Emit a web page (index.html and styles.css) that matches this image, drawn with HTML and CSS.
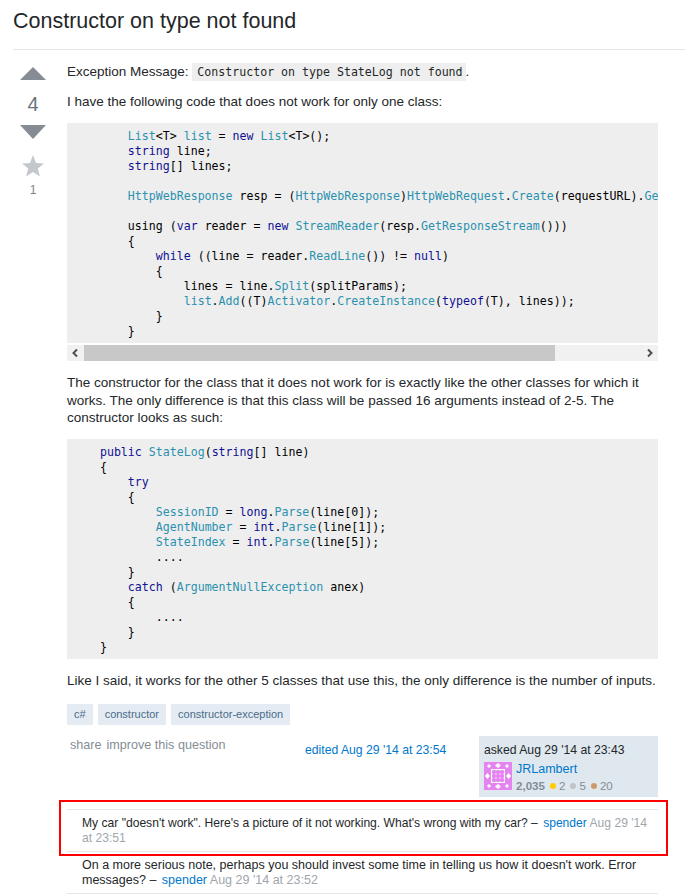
FILE: index.html
```html
<!DOCTYPE html>
<html lang="en">
<head>
    <meta charset="UTF-8">
    <meta name="viewport" content="width=device-width, initial-scale=1.0">
    <title>Constructor on type not found</title>
    <link rel="stylesheet" href="styles.css">
</head>

<body>
    <h1 class="title">Constructor on type not found</h1>
    <div class="question">
        <div class="votes">
            <svg class="arrow-up" width="26" height="13" viewBox="0 0 26 13"><polygon points="13,0 26,13 0,13"/></svg>
            <div class="count">4</div>
            <svg class="arrow-down" width="26" height="14" viewBox="0 0 26 14"><polygon points="0,0 26,0 13,14"/></svg>
            <svg class="star" width="22" height="22" viewBox="0 0 22 22"><polygon points="11,0 14,8 22,8.4 15.8,13.4 17.9,21.5 11,17 4.1,21.5 6.2,13.4 0,8.4 8,8"/></svg>
            <div class="favs">1</div>
        </div>
        <div class="post">
            <p>Exception Message: <code>Constructor on type StateLog not found</code>.</p>
            <p>I have the following code that does not work for only one class:</p>
            <pre class="code scrolled">        <span class="t">List</span>&lt;T&gt; <span class="t">list</span> = <span class="k">new</span> <span class="t">List</span>&lt;T&gt;();
        <span class="k">string</span> line;
        <span class="k">string</span>[] lines;

        <span class="t">HttpWebResponse</span> resp = (<span class="t">HttpWebResponse</span>)<span class="t">HttpWebRequest</span>.<span class="t">Create</span>(requestURL).<span class="t">GetResponse</span>();

        using (<span class="k">var</span> reader = <span class="k">new</span> <span class="t">StreamReader</span>(resp.<span class="t">GetResponseStream</span>()))
        {
            <span class="k">while</span> ((line = reader.<span class="t">ReadLine</span>()) != <span class="k">null</span>)
            {
                lines = line.<span class="t">Split</span>(splitParams);
                <span class="t">list</span>.<span class="t">Add</span>((T)<span class="t">Activator</span>.<span class="t">CreateInstance</span>(<span class="k">typeof</span>(T), lines));
            }
        }</pre>
            <div class="scrollbar">
                <svg width="17" height="16" viewBox="0 0 17 16"><path d="M10 4.5 L6.5 8 L10 11.5" fill="none" stroke="#505050" stroke-width="2"/></svg>
                <div class="track"><div class="thumb"></div></div>
                <svg width="17" height="16" viewBox="0 0 17 16"><path d="M7 4.5 L10.5 8 L7 11.5" fill="none" stroke="#505050" stroke-width="2"/></svg>
            </div>
            <p>The constructor for the class that it does not work for is exactly like the other classes for which it works. The only difference is that this class will be passed 16 arguments instead of 2-5. The constructor looks as such:</p>
            <pre class="code">    <span class="k">public</span> <span class="t">StateLog</span>(<span class="k">string</span>[] line)
    {
        <span class="k">try</span>
        {
            <span class="t">SessionID</span> = <span class="k">long</span>.<span class="t">Parse</span>(line[0]);
            <span class="t">AgentNumber</span> = <span class="k">int</span>.<span class="t">Parse</span>(line[1]);
            <span class="t">StateIndex</span> = <span class="k">int</span>.<span class="t">Parse</span>(line[5]);
            ....
        }
        <span class="k">catch</span> (<span class="t">ArgumentNullException</span> anex)
        {
            ....
        }
    }</pre>
            <p>Like I said, it works for the other 5 classes that use this, the only difference is the number of inputs.</p>
            <div class="tags">
                <a class="tag">c#</a>
                <a class="tag">constructor</a>
                <a class="tag">constructor-exception</a>
            </div>
            <div class="post-footer">
                <div class="menu"><a>share</a><a>improve this question</a></div>
                <a class="edited">edited Aug 29 '14 at 23:54</a>
                <div class="owner">
                    <div class="asked">asked Aug 29 '14 at 23:43</div>
                    <div class="user">
                        <svg class="avatar" width="28" height="28" viewBox="0 0 28 28">
                            <rect width="28" height="28" fill="#e584f0"/>
                            <rect x="7" y="7" width="14" height="14" fill="#fff"/>
                            <g fill="#e584f0">
                                <circle cx="10" cy="10" r="2.2"/><circle cx="14" cy="10" r="2.2"/><circle cx="18" cy="10" r="2.2"/>
                                <circle cx="10" cy="14" r="2.2"/><circle cx="14" cy="14" r="2.2"/><circle cx="18" cy="14" r="2.2"/>
                                <circle cx="10" cy="18" r="2.2"/><circle cx="14" cy="18" r="2.2"/><circle cx="18" cy="18" r="2.2"/>
                            </g>
                            <g fill="#fff">
                                <polygon points="14,1 17,3.5 14,6 11,3.5"/><polygon points="14,22 17,24.5 14,27 11,24.5"/>
                                <polygon points="3.5,11 6,14 3.5,17 1,14"/><polygon points="24.5,11 27,14 24.5,17 22,14"/>
                                <polygon points="5,2 7,4 5,6 3,4"/><polygon points="23,2 25,4 23,6 21,4"/>
                                <polygon points="5,22 7,24 5,26 3,24"/><polygon points="23,22 25,24 23,26 21,24"/>
                            </g>
                        </svg>
                        <div class="user-info">
                            <a class="user-name">JRLambert</a>
                            <div class="rep"><b>2,035</b><i class="dot gold"></i>2<i class="dot silver"></i>5<i class="dot bronze"></i>20</div>
                        </div>
                    </div>
                </div>
            </div>
            <div class="comments">
                <div class="comment">My car "doesn't work". Here's a picture of it not working. What's wrong with my car? &ndash; <a>spender</a> <span class="date">Aug 29 '14 at 23:51</span></div>
                <div class="comment">On a more serious note, perhaps you should invest some time in telling us how it doesn't work. Error messages? &ndash; <a>spender</a> <span class="date">Aug 29 '14 at 23:52</span></div>
                <div class="highlight"></div>
            </div>
        </div>
    </div>
</body>

</html>
```

FILE: styles.css
```css
body {
    margin: 0;
    padding-left: 13px;
    height: 894px;
    overflow: hidden;
    background: #fff;
    color: #242729;
    font-family: "Liberation Sans", Arial, sans-serif;
    font-size: 13.5px;
    line-height: 17.5px;
}

a {
    color: #0077cc;
}

.title {
    margin: 0;
    height: 49px;
    font-size: 21.5px;
    font-weight: normal;
    line-height: 42px;
    border-bottom: 1px solid #e4e6e8;
}

.question {
    display: flex;
    padding-top: 12.5px;
}

.votes {
    width: 40px;
    margin-right: 14px;
    flex-shrink: 0;
    display: flex;
    flex-direction: column;
    align-items: center;
    padding-top: 4.5px;
    color: #6a737c;
}

.votes svg {
    fill: #858c93;
}

.count {
    font-size: 20px;
    line-height: 24px;
    margin: 12px 0 9px;
}

.votes .star {
    fill: #c4c8cc;
    margin-top: 16px;
}

.favs {
    font-size: 12px;
    line-height: 16px;
    margin-top: 5px;
    color: #808185;
}

.post {
    width: 591px;
    flex-shrink: 0;
}

.post p {
    margin: 0 0 12px;
    padding-top: 0.5px;
}

.post p:first-child {
    margin-bottom: 12.5px;
    padding-top: 0;
}

code {
    font-family: "DejaVu Sans Mono", monospace;
    font-size: 11.6px;
    line-height: 1;
    background: #eee;
    padding: 2px 3px 2px 5px;
}

.code {
    margin: 0 0 12.5px;
    padding: 6px 5px 4px;
    background: #eee;
    color: #000;
    font-family: "DejaVu Sans Mono", monospace;
    font-size: 11.6px;
    line-height: 15px;
    overflow: hidden;
}

.code.scrolled {
    margin-bottom: 2px;
}

.t {
    color: #2b91af;
}

.k {
    color: #101094;
}

.scrollbar {
    display: flex;
    height: 16px;
    margin-bottom: 13px;
    background: #f1f1f1;
}

.track {
    flex: 1;
}

.thumb {
    width: 471px;
    height: 100%;
    background: #c8c8c8;
}

.tags {
    display: flex;
    gap: 5px;
    margin-top: 15px;
    height: 21px;
}

.tag {
    padding: 0 7px;
    background: #e4ebf3;
    color: #4a6b8a;
    font-size: 11px;
    line-height: 21px;
}

.post-footer {
    display: flex;
    margin-top: 11px;
    font-size: 12.2px;
}

.menu {
    width: 238px;
    box-sizing: border-box;
    padding: 1px 0 0 3px;
    color: #848d95;
    font-size: 12.6px;
}

.menu a {
    color: #848d95;
    margin-right: 5px;
}

.edited {
    width: 174px;
    padding-top: 6px;
}

.owner {
    width: 179px;
    height: 61px;
    padding: 6px 5px 5px;
    box-sizing: border-box;
    background: #dfe8ef;
}

.user {
    display: flex;
    margin-top: 2px;
}

.user-info {
    margin-left: 4px;
}

.user-name {
    display: block;
    font-size: 12.5px;
    line-height: 15px;
}

.rep {
    color: #848d95;
    margin-top: 1px;
    font-size: 11.6px;
    line-height: 16px;
}

.dot {
    display: inline-block;
    width: 6px;
    height: 6px;
    border-radius: 50%;
    margin: 0 3px 1px 5px;
}

.gold { background: #ffcc00; }
.silver { background: #c0c4c8; }
.bronze { background: #cd9a6a; }

.comments {
    position: relative;
    margin-top: 12px;
    font-size: 12.1px;
    line-height: 15px;
}

.comment {
    padding: 6px 8px 5px 15px;
    border-top: 1px solid #e4e6e8;
}

.comment:nth-child(2) {
    font-size: 12.5px;
    border-bottom: 1px solid #e4e6e8;
}

.comment a {
    margin-left: 2px;
}

.date {
    color: #9fa6ad;
}

.highlight {
    position: absolute;
    left: -8px;
    right: -10px;
    top: -9px;
    height: 52px;
    border: 2px solid #f00;
}
```
